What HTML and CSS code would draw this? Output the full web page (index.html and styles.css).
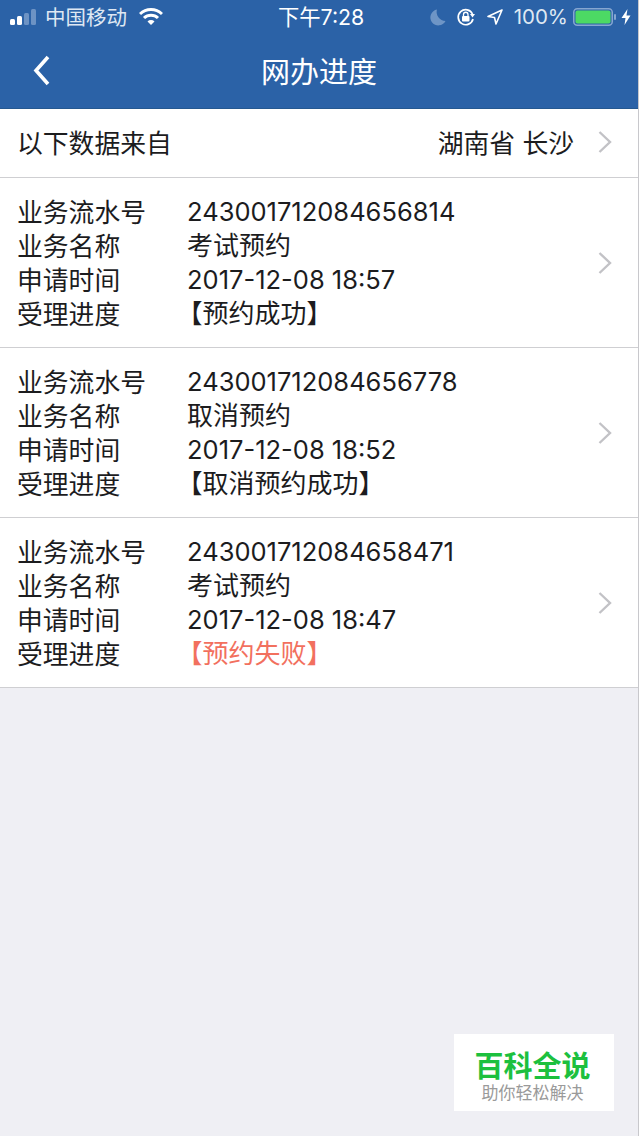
FILE: index.html
```html
<!DOCTYPE html>
<html lang="zh-CN">
<head>
<meta charset="utf-8">
<title>网办进度</title>
<link rel="stylesheet" href="styles.css">
</head>
<body>
<div class="page">
  <header class="top">
    <div class="status">
      <div class="status-left">
        <svg class="signal" width="28" height="16" viewBox="0 0 28 16"><rect class="s-on" x="0" y="10" width="5" height="6" rx="1.5"/><rect class="s-on" x="7" y="7" width="5" height="9" rx="1.5"/><rect class="s-off" x="14" y="4" width="5" height="12" rx="1.5"/><rect class="s-off" x="21" y="0" width="5" height="16" rx="1.5"/></svg>
        <span class="carrier">中国移动</span>
        <svg class="wifi" width="24" height="18" viewBox="0 0 24 18"><path d="M1 6 A16 16 0 0 1 23 6" fill="none" stroke="#fff" stroke-width="3"/><path d="M5 10 A10 10 0 0 1 19 10" fill="none" stroke="#fff" stroke-width="3"/><path d="M8.5 13.5 A5 5 0 0 1 15.5 13.5 L12 17 Z" fill="#fff"/></svg>
      </div>
      <div class="clock">下午7:28</div>
      <div class="status-right">
        <svg class="moon" width="18" height="18" viewBox="0 0 18 18"><path d="M8 1.5 A8 8 0 1 0 16.5 13 A9 9 0 0 1 8 1.5 Z" fill="#6e95c6"/></svg>
        <svg class="lock" width="20" height="20" viewBox="0 0 20 20"><path d="M16.5 7 A7.5 7.5 0 1 0 17 12" fill="none" stroke="#fff" stroke-width="1.7"/><path d="M14 7 H19 L16.5 10.5 Z" fill="#fff"/><rect x="6" y="9" width="7.5" height="5.5" rx="1" fill="#fff"/><path d="M7.5 9 V7.5 A2.2 2.2 0 0 1 12 7.5 V9" fill="none" stroke="#fff" stroke-width="1.3"/></svg>
        <svg class="loc" width="16" height="16" viewBox="0 0 16 16"><path d="M15 1 L1 7.5 L7.5 8.5 L9 15 Z" fill="none" stroke="#fff" stroke-width="1.6" stroke-linejoin="round"/></svg>
        <span class="pct">100%</span>
        <svg class="batt" width="46" height="18" viewBox="0 0 46 18"><rect x="0.75" y="0.75" width="38.5" height="16.5" rx="3.5" fill="none" stroke="#86a6d0" stroke-width="1.5"/><rect x="2.5" y="2.5" width="35" height="13" rx="2" fill="#4cd964"/><rect x="41" y="6" width="2" height="6" rx="1" fill="#86a6d0"/></svg>
        <svg class="bolt" width="10" height="16" viewBox="0 0 10 16"><path d="M6.5 0 L0.5 9 H4.5 L3.5 16 L9.5 6.5 H5.5 Z" fill="#fff"/></svg>
      </div>
    </div>
    <div class="nav">
      <svg class="back" width="20" height="32" viewBox="0 0 20 32"><path d="M16 2 L4 15.5 L16 29" fill="none" stroke="#fff" stroke-width="3.6"/></svg>
      <h1 class="title">网办进度</h1>
    </div>
  </header>

  <div class="source">
    <span>以下数据来自</span>
    <span class="source-right">
      <span class="region">湖南省 长沙</span>
      <svg class="chev" width="14" height="24" viewBox="0 0 14 24"><path d="M1.5 2 L12 12 L1.5 22" fill="none" stroke="#c2c2c6" stroke-width="2.4"/></svg>
    </span>
  </div>

  <div class="item">
    <dl class="fields">
      <dt>业务流水号</dt><dd>243001712084656814</dd>
      <dt>业务名称</dt><dd class="name">考试预约</dd>
      <dt>申请时间</dt><dd>2017-12-08 18:57</dd>
      <dt>受理进度</dt><dd class="state">【预约成功】</dd>
    </dl>
    <svg class="chev" width="14" height="24" viewBox="0 0 14 24"><path d="M1.5 2 L12 12 L1.5 22" fill="none" stroke="#c2c2c6" stroke-width="2.4"/></svg>
  </div>

  <div class="item">
    <dl class="fields">
      <dt>业务流水号</dt><dd>243001712084656778</dd>
      <dt>业务名称</dt><dd class="name">取消预约</dd>
      <dt>申请时间</dt><dd>2017-12-08 18:52</dd>
      <dt>受理进度</dt><dd class="state">【取消预约成功】</dd>
    </dl>
    <svg class="chev" width="14" height="24" viewBox="0 0 14 24"><path d="M1.5 2 L12 12 L1.5 22" fill="none" stroke="#c2c2c6" stroke-width="2.4"/></svg>
  </div>

  <div class="item">
    <dl class="fields">
      <dt>业务流水号</dt><dd>243001712084658471</dd>
      <dt>业务名称</dt><dd class="name">考试预约</dd>
      <dt>申请时间</dt><dd>2017-12-08 18:47</dd>
      <dt>受理进度</dt><dd class="state fail">【预约失败】</dd>
    </dl>
    <svg class="chev" width="14" height="24" viewBox="0 0 14 24"><path d="M1.5 2 L12 12 L1.5 22" fill="none" stroke="#c2c2c6" stroke-width="2.4"/></svg>
  </div>

  <div class="mark">
    <div class="mark-title">百科全说</div>
    <div class="mark-sub">助你轻松解决</div>
  </div>
</div>
</body>
</html>
```

FILE: styles.css
```css
* { box-sizing: border-box; }
html, body { margin: 0; padding: 0; }
body {
  background: #efeff4;
  font-family: Inter, "Noto Sans CJK SC", sans-serif;
  color: #1c1c1e;
}
.page {
  position: relative;
  width: 639px;
  height: 1136px;
  overflow: hidden;
  background: #efeff4;
  border-right: 1px solid #c8c8cc;
}
.top {
  background: #2b62a7;
  height: 109px;
  color: #fff;
  border-bottom: 1px solid #255890;
}
.status {
  height: 36px;
  display: flex;
  align-items: center;
  justify-content: space-between;
  padding: 0 7px 2px 10px;
  position: relative;
  font-size: 20.5px;
}
.status-left, .status-right { display: flex; align-items: center; }
.signal { margin-right: 7px; }
.s-on { fill: #fff; }
.s-off { fill: #6d93c4; }
.carrier { color: #dfe8f3; margin-top: -2px; }
.wifi { margin-left: 12px; }
.clock {
  position: absolute;
  left: 278px;
  top: 4px;
  font-size: 21.3px;
  line-height: 26px;
}
.moon { margin-right: 9px; }
.lock { margin-right: 11px; }
.loc { margin-right: 11px; }
.pct { margin-right: 5px; margin-top: -2px; color: #dfe8f3; }
.batt { margin-right: 2px; }
.nav {
  height: 73px;
  display: flex;
  align-items: center;
  justify-content: center;
  position: relative;
}
.back { position: absolute; left: 32px; top: 19px; }
.title {
  margin: 0;
  font-size: 29px;
  font-weight: 400;
  line-height: 40px;
}
.source {
  height: 69px;
  background: #fff;
  border-bottom: 1px solid #cfcfd2;
  display: flex;
  align-items: center;
  justify-content: space-between;
  padding: 0 26px 3px 17px;
  font-size: 25.8px;
}
.source-right { display: flex; align-items: center; gap: 24px; }
.region { color: #1c1c1e; }
.item {
  height: 170px;
  background: #fff;
  border-bottom: 1px solid #cfcfd2;
  display: flex;
  align-items: center;
  justify-content: space-between;
  padding: 0 26px 0 17px;
  font-size: 25.5px;
}
.fields {
  margin: 0;
  display: grid;
  grid-template-columns: 170px auto;
  grid-auto-rows: 34px;
  line-height: 34px;
}
.fields dt, .fields dd { margin: 0; white-space: nowrap; }
.fields dt { font-size: 25.8px; padding-top: 1px; }
.fields dd.name { font-size: 26px; }
.fields dd.state { margin-left: -10.5px; font-size: 26px; }
.fail { color: #f2705e; }
.mark {
  position: absolute;
  left: 454px;
  top: 1034px;
  width: 160px;
  height: 77px;
  background: #fff;
  padding-right: 3px;
  text-align: center;
}
.mark-title {
  margin-top: 16px;
  font-size: 29px;
  font-weight: 700;
  line-height: 34px;
  color: #1cc03e;
}
.mark-sub {
  margin-top: -3px;
  font-size: 17px;
  line-height: 24px;
  color: #9a9a9a;
}
```
